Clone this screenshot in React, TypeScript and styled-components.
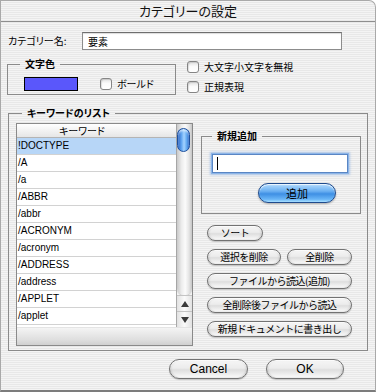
import React from "react";
import styled, { createGlobalStyle } from "styled-components";

const GlobalStyle = createGlobalStyle`
  html, body { margin: 0; padding: 0; }
  body {
    width: 376px;
    height: 392px;
    overflow: hidden;
    font-family: "Liberation Sans", "Noto Sans CJK JP", sans-serif;
    font-feature-settings: "palt";
    -webkit-font-smoothing: antialiased;
  }
`;

const pinstripe = `repeating-linear-gradient(to bottom, #f4f4f4 0px, #f4f4f4 1px, #e8e8e8 1px, #e8e8e8 2px)`;

const Window = styled.div`
  width: 376px;
  height: 392px;
  box-sizing: border-box;
  display: flex;
  flex-direction: column;
  background: ${pinstripe};
  border: 1px solid #a9a9a9;
  border-bottom: 2px solid #7c7c7c;
  border-radius: 0 7px 0 0;
  overflow: hidden;
  color: #000;
`;

const TitleBar = styled.div`
  height: 20px;
  flex: none;
  border-bottom: 1px solid #8e8e8e;
  font-family: "Noto Sans CJK JP", sans-serif;
  font-size: 13px;
  line-height: 20px;
  text-align: center;
  color: #111;
`;

const NameRow = styled.div`
  display: flex;
  align-items: center;
  margin-top: 10px;
  height: 18px;
`;

const Label = styled.span`
  font-family: "Noto Sans CJK JP", sans-serif;
  font-size: 10px;
  line-height: 12px;
  white-space: nowrap;
`;

const NameLabel = styled(Label)`
  width: 81px;
  box-sizing: border-box;
  padding-left: 7px;
`;

const TextField = styled.input`
  width: 260px;
  height: 18px;
  box-sizing: border-box;
  border: 1px solid #8c8c8c;
  border-top-color: #6e6e6e;
  box-shadow: inset 0 1px 1px rgba(0, 0, 0, 0.14);
  background: #fff;
  padding: 0 5px;
  margin: 0;
  font-family: "Noto Sans CJK JP", sans-serif;
  font-size: 10px;
  color: #000;
  outline: none;
`;

const OptionsRow = styled.div`
  display: flex;
  margin-top: 7px;
`;

const Group = styled.fieldset`
  margin: 0;
  min-width: 0;
  box-sizing: border-box;
  border: 1px solid #8a8a8a;
`;

const Legend = styled.legend<{ $offset: number }>`
  font-family: "Noto Sans CJK JP", sans-serif;
  font-weight: bold;
  font-size: 10px;
  line-height: 14px;
  padding: 0 5px;
  margin-left: ${(p) => p.$offset}px;
`;

const ColorGroup = styled(Group)`
  margin-left: 6px;
  width: 169px;
  height: 38px;
  padding: 3px 0 0 12px;
  display: flex;
  align-items: center;
  align-content: flex-start;
`;

const GroupInner = styled.div`
  display: flex;
  align-items: center;
`;

const Swatch = styled.div`
  margin-left: 4px;
  width: 54px;
  height: 14px;
  box-sizing: border-box;
  border: 1px solid #000;
  background: #5a57fb;
`;

const CheckRow = styled.label<{ $ml?: number }>`
  display: flex;
  align-items: center;
  gap: 5px;
  height: 12px;
  margin-left: ${(p) => p.$ml ?? 0}px;
`;

const CheckBox = styled.span`
  width: 12px;
  height: 12px;
  box-sizing: border-box;
  border: 1px solid #858585;
  border-radius: 3px;
  background: linear-gradient(to bottom, #e2e2e2 0%, #fbfbfb 45%, #ffffff 100%);
  box-shadow: inset 1px 1px 1px rgba(0, 0, 0, 0.12);
  flex: none;
`;

const CheckColumn = styled.div`
  display: flex;
  flex-direction: column;
  gap: 8px;
  margin: 4px 0 0 11px;
`;

const KeywordGroup = styled(Group)`
  margin: 11px 0 0 7px;
  width: 360px;
  height: 245px;
  padding: 3px 0 0 7px;
  display: flex;
  align-items: flex-start;
`;

const ListBox = styled.div`
  width: 177px;
  height: 223px;
  box-sizing: border-box;
  border: 1px solid #8a8a8a;
  background: #fff;
  display: flex;
  flex-direction: column;
  flex: none;
`;

const ListMain = styled.div`
  display: flex;
  height: 203px;
`;

const RowsCol = styled.div`
  width: 159px;
  display: flex;
  flex-direction: column;
`;

const Header = styled.div`
  height: 13px;
  border-bottom: 1px solid #b4b4b4;
  background: linear-gradient(to bottom, #ffffff, #e6e6e6);
  font-family: "Noto Sans CJK JP", sans-serif;
  font-size: 10px;
  line-height: 13px;
  text-align: center;
  padding-right: 29px;
`;

const Row = styled.div<{ $selected?: boolean }>`
  height: 16px;
  border-bottom: 1px solid #d2d2d2;
  padding-left: 1px;
  font-family: "Liberation Sans", sans-serif;
  font-size: 10px;
  line-height: 16px;
  background: ${(p) => (p.$selected ? "#b7d6f7" : "#fff")};
  white-space: nowrap;
`;

const ScrollCol = styled.div`
  width: 16px;
  box-sizing: border-box;
  border-left: 1px solid #a9a9a9;
  display: flex;
  flex-direction: column;
  background: #f4f4f4;
`;

const Track = styled.div`
  flex: 1;
  border-radius: 0 0 7px 7px;
  background: linear-gradient(to right, #c9c9c9 0%, #ececec 30%, #fbfbfb 55%, #e4e4e4 80%, #c6c6c6 100%);
  box-shadow: 0 1px 1px rgba(0, 0, 0, 0.18);
`;

const Thumb = styled.div`
  width: 13px;
  height: 24px;
  margin: 4px 0 0 0;
  box-sizing: border-box;
  border: 1px solid #1d4f9c;
  border-radius: 7px;
  background: linear-gradient(to right, #2a62c2 0%, #5ea3ef 30%, #a4d3ff 55%, #63aaf1 78%, #2a66c6 100%);
  box-shadow: inset 0 2px 2px rgba(255, 255, 255, 0.6);
`;

const Arrow = styled.div`
  height: 16px;
  display: flex;
  align-items: center;
  justify-content: center;
  background: linear-gradient(to right, #e2e2e2, #fafafa 50%, #e2e2e2);
  border-top: 1px solid #c4c4c4;
  box-sizing: border-box;
`;

const ListBottom = styled.div`
  flex: 1;
  border-top: 1px solid #e4e4e4;
  background: linear-gradient(to bottom, #f4f4f4 0%, #dedede 70%, #d0d0d0 100%);
`;

const RightCol = styled.div`
  display: flex;
  flex-direction: column;
  margin-left: 8px;
`;

const NewGroup = styled(Group)`
  margin-top: 6px;
  width: 160px;
  height: 85px;
  padding: 10px 0 0 8px;
  display: flex;
  flex-direction: column;
`;

const FocusField = styled.div`
  margin: 1px 0 0 2px;
  width: 136px;
  height: 19px;
  box-sizing: border-box;
  border: 1px solid #5a86c4;
  background: #fff;
  box-shadow: 0 0 0 1px #8cb5e8, 0 0 2px 2px rgba(120, 165, 228, 0.55);
  display: flex;
  align-items: center;
  padding-left: 4px;
`;

const Caret = styled.span`
  width: 1px;
  height: 13px;
  background: #000;
`;

const PillButton = styled.button<{ $w: number; $h?: number; $fs?: number }>`
  width: ${(p) => p.$w}px;
  height: ${(p) => p.$h ?? 16}px;
  box-sizing: border-box;
  margin: 0;
  padding: 0;
  border: 1px solid #727272;
  border-radius: 999px;
  background: linear-gradient(to bottom, #f6f6f6 0%, #ececec 45%, #dedede 55%, #f2f2f2 85%, #ffffff 100%);
  box-shadow: inset 0 1px 1px rgba(255, 255, 255, 0.9), inset 1px 0 2px rgba(0, 0, 0, 0.12),
    inset -1px 0 2px rgba(0, 0, 0, 0.12), 0 1px 1px rgba(0, 0, 0, 0.2);
  font-family: "Noto Sans CJK JP", sans-serif;
  font-size: ${(p) => p.$fs ?? 10}px;
  letter-spacing: -0.5px;
  line-height: 1;
  color: #000;
  white-space: nowrap;
  cursor: default;
`;

const DefaultButton = styled(PillButton)`
  align-self: flex-end;
  margin: 10px 24px 0 0;
  border-color: #1f4a8c;
  background: linear-gradient(to bottom, #b3dbfd 0%, #6bb0f2 40%, #3e8fe4 55%, #6ab6f7 85%, #a9e0ff 100%);
  box-shadow: inset 0 1px 1px rgba(255, 255, 255, 0.8), 0 1px 2px rgba(0, 0, 0, 0.3);
  font-size: 11px;
  letter-spacing: 0;
`;

const ButtonStack = styled.div`
  display: flex;
  flex-direction: column;
  gap: 8px;
  margin: 11px 0 0 6px;
`;

const ButtonPair = styled.div`
  display: flex;
  gap: 6px;
`;

const FooterRow = styled.div`
  display: flex;
  justify-content: flex-end;
  gap: 18px;
  margin-top: 8px;
  padding-right: 31px;
`;

const FooterButton = styled(PillButton)`
  font-family: "Liberation Sans", sans-serif;
  letter-spacing: 0;
`;

const TriUp = () => (
  <svg width="8" height="6" viewBox="0 0 8 6">
    <path d="M4 0 L8 6 L0 6 Z" fill="#3a3a3a" />
  </svg>
);

const TriDown = () => (
  <svg width="8" height="6" viewBox="0 0 8 6">
    <path d="M0 0 L8 0 L4 6 Z" fill="#3a3a3a" />
  </svg>
);

const keywords = [
  "!DOCTYPE",
  "/A",
  "/a",
  "/ABBR",
  "/abbr",
  "/ACRONYM",
  "/acronym",
  "/ADDRESS",
  "/address",
  "/APPLET",
  "/applet",
];

export default function App() {
  return (
    <>
      <GlobalStyle />
      <Window>
        <TitleBar>カテゴリーの設定</TitleBar>
        <NameRow>
          <NameLabel>カテゴリー名:</NameLabel>
          <TextField defaultValue="要素" />
        </NameRow>
        <OptionsRow>
          <ColorGroup>
            <Legend $offset={0}>文字色</Legend>
            <GroupInner>
              <Swatch />
              <CheckRow $ml={22}>
                <CheckBox />
                <Label>ボールド</Label>
              </CheckRow>
            </GroupInner>
          </ColorGroup>
          <CheckColumn>
            <CheckRow>
              <CheckBox />
              <Label>大文字小文字を無視</Label>
            </CheckRow>
            <CheckRow>
              <CheckBox />
              <Label>正規表現</Label>
            </CheckRow>
          </CheckColumn>
        </OptionsRow>
        <KeywordGroup>
          <Legend $offset={6}>キーワードのリスト</Legend>
          <ListBox>
            <ListMain>
              <RowsCol>
                <Header>キーワード</Header>
                {keywords.map((k, i) => (
                  <Row key={k} $selected={i === 0}>
                    {k}
                  </Row>
                ))}
              </RowsCol>
              <ScrollCol>
                <Track>
                  <Thumb />
                </Track>
                <Arrow>
                  <TriUp />
                </Arrow>
                <Arrow>
                  <TriDown />
                </Arrow>
              </ScrollCol>
            </ListMain>
            <ListBottom />
          </ListBox>
          <RightCol>
            <NewGroup>
              <Legend $offset={2}>新規追加</Legend>
              <FocusField>
                <Caret />
              </FocusField>
              <DefaultButton $w={78} $h={20}>
                追加
              </DefaultButton>
            </NewGroup>
            <ButtonStack>
              <PillButton $w={56}>ソート</PillButton>
              <ButtonPair>
                <PillButton $w={74}>選択を削除</PillButton>
                <PillButton $w={65}>全削除</PillButton>
              </ButtonPair>
              <PillButton $w={145}>ファイルから読込(追加)</PillButton>
              <PillButton $w={145}>全削除後ファイルから読込</PillButton>
              <PillButton $w={145}>新規ドキュメントに書き出し</PillButton>
            </ButtonStack>
          </RightCol>
        </KeywordGroup>
        <FooterRow>
          <FooterButton $w={79} $h={20} $fs={12}>
            Cancel
          </FooterButton>
          <FooterButton $w={78} $h={20} $fs={12}>
            OK
          </FooterButton>
        </FooterRow>
      </Window>
    </>
  );
}
